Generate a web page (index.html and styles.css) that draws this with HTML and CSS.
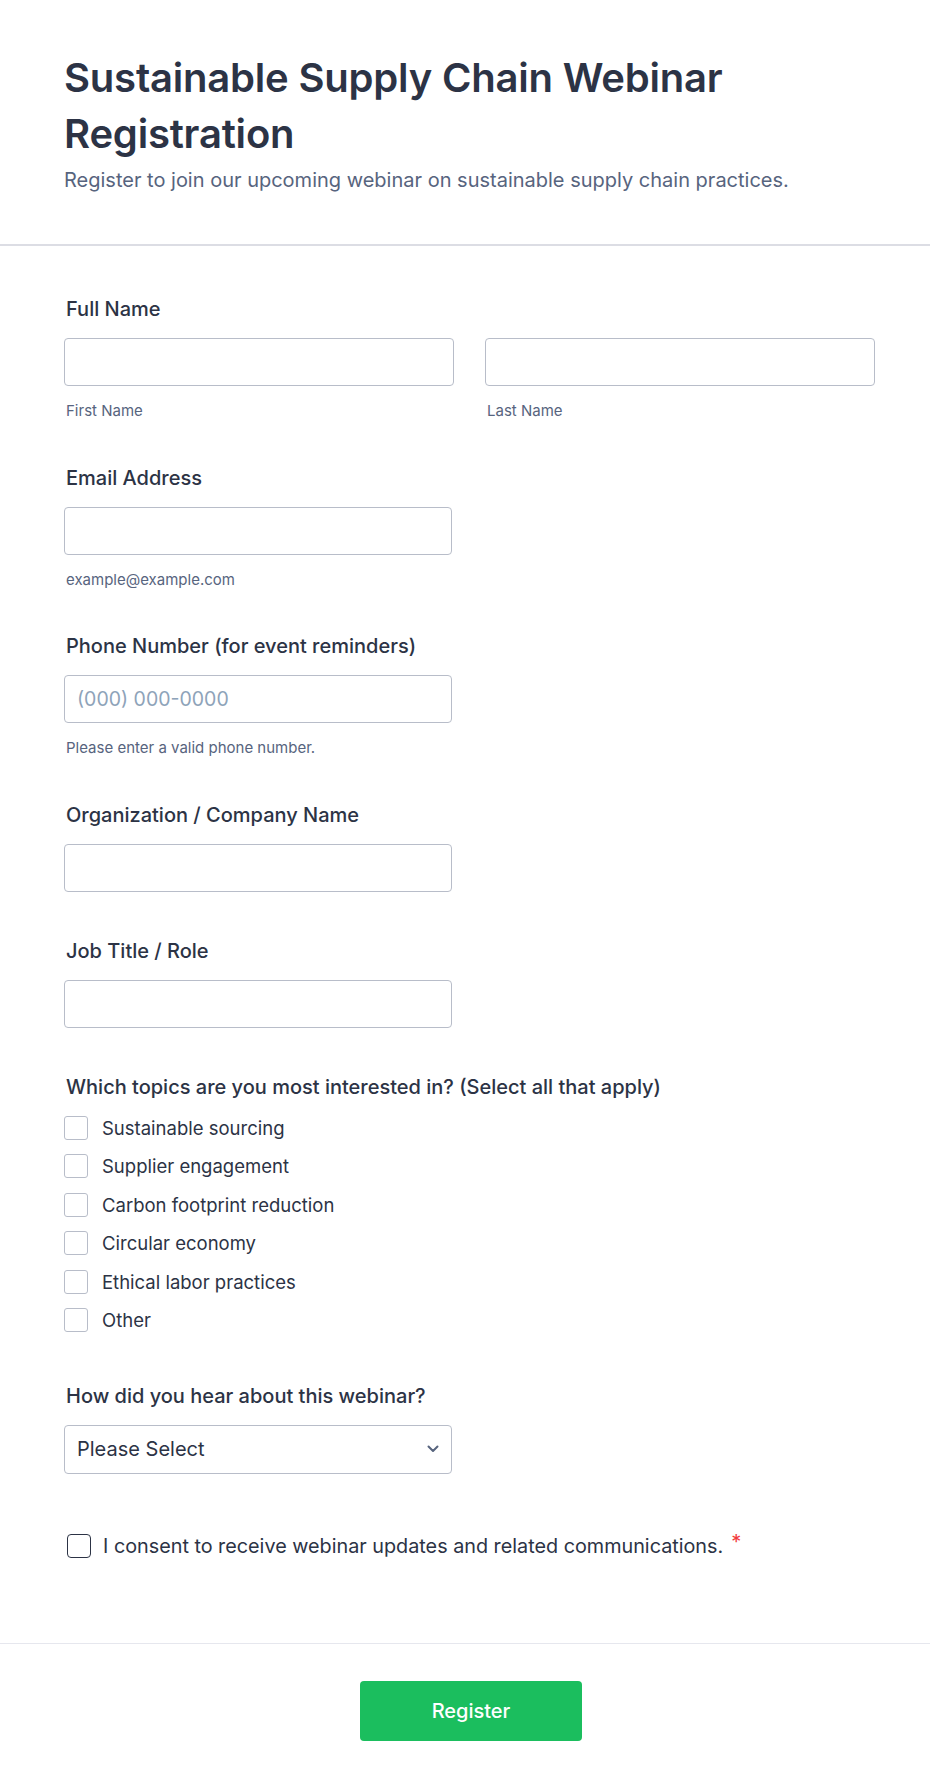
FILE: index.html
```html
<!DOCTYPE html>
<html lang="en">
<head>
<meta charset="utf-8">
<title>Sustainable Supply Chain Webinar Registration</title>
<link rel="stylesheet" href="styles.css">
</head>
<body>
<div class="page">
  <header class="header">
    <h1 class="title">Sustainable Supply Chain Webinar Registration</h1>
    <p class="subtitle">Register to join our upcoming webinar on sustainable supply chain practices.</p>
  </header>

  <form class="form">
    <div class="field">
      <label class="label">Full Name</label>
      <div class="name-row">
        <div class="name-col">
          <input class="input" type="text">
          <span class="sublabel">First Name</span>
        </div>
        <div class="name-col">
          <input class="input" type="text">
          <span class="sublabel">Last Name</span>
        </div>
      </div>
    </div>

    <div class="field">
      <label class="label">Email Address</label>
      <input class="input input-half" type="email">
      <span class="sublabel">example@example.com</span>
    </div>

    <div class="field field-phone">
      <label class="label">Phone Number (for event reminders)</label>
      <input class="input input-half" type="tel" placeholder="(000) 000-0000">
      <span class="sublabel">Please enter a valid phone number.</span>
    </div>

    <div class="field">
      <label class="label">Organization / Company Name</label>
      <input class="input input-half" type="text">
    </div>

    <div class="field field-job">
      <label class="label">Job Title / Role</label>
      <input class="input input-half" type="text">
    </div>

    <div class="field field-topics">
      <label class="label">Which topics are you most interested in? (Select all that apply)</label>
      <div class="options">
        <label class="option"><span class="box"></span><span>Sustainable sourcing</span></label>
        <label class="option"><span class="box"></span><span>Supplier engagement</span></label>
        <label class="option"><span class="box"></span><span>Carbon footprint reduction</span></label>
        <label class="option"><span class="box"></span><span>Circular economy</span></label>
        <label class="option"><span class="box"></span><span>Ethical labor practices</span></label>
        <label class="option"><span class="box"></span><span>Other</span></label>
      </div>
    </div>

    <div class="field field-select">
      <label class="label">How did you hear about this webinar?</label>
      <div class="select">
        <span>Please Select</span>
        <svg class="chevron" width="12" height="8" viewBox="0 0 12 8"><path d="M1.5 1.5 L6 6 L10.5 1.5" fill="none" stroke="#57647e" stroke-width="2" stroke-linecap="round" stroke-linejoin="round"/></svg>
      </div>
    </div>

    <div class="field field-consent">
      <label class="consent"><span class="consent-box"></span><span>I consent to receive webinar updates and related communications.</span><span class="req">*</span></label>
    </div>
  </form>

  <footer class="footer">
    <button class="submit" type="button">Register</button>
  </footer>
</div>
</body>
</html>
```

FILE: styles.css
```css
* { box-sizing: border-box; }

html, body {
  margin: 0;
  padding: 0;
  background: #ffffff;
}

body {
  font-family: "Inter", "Noto Sans", sans-serif;
  color: #2c3345;
}

.page {
  width: 930px;
  min-height: 1790px;
  border-bottom: 1px solid #eceef3;
}

.header {
  padding: 50px 55px 52px 64px;
  border-bottom: 2px solid #dcdde4;
}

.title {
  margin: 0;
  font-size: 40px;
  line-height: 56px;
  font-weight: 600;
  color: #2c3345;
  letter-spacing: -0.2px;
}

.subtitle {
  margin: 6px 0 0;
  font-size: 20px;
  line-height: 24px;
  color: #57647e;
}

.form {
  padding: 51px 55px 85px 64px;
  display: flex;
  flex-direction: column;
  gap: 46px;
}

.field {
  display: flex;
  flex-direction: column;
  align-items: flex-start;
}

.field-phone { margin-top: -1px; }
.field-job { margin-top: 1px; }
.field-topics { margin-top: 1px; }
.field-select { margin-top: 6px; }
.field-consent { margin-top: 14px; }

.label {
  font-size: 20px;
  line-height: 24px;
  font-weight: 500;
  color: #2c3345;
  margin-bottom: 17px;
  padding-left: 2px;
}

.name-row {
  display: grid;
  grid-template-columns: 390px 390px;
  column-gap: 31px;
  width: 100%;
}

.name-col {
  display: flex;
  flex-direction: column;
}

.input {
  height: 48px;
  width: 100%;
  border: 1px solid #b8bdc9;
  border-radius: 4px;
  background: #fff;
  font-family: "Inter", "Noto Sans", sans-serif;
  font-size: 19.5px;
  padding: 0 12px;
  color: #2c3345;
}

.input::placeholder {
  color: #8ea3b9;
}

.input-half {
  width: 388px;
}

.sublabel {
  margin-top: 16px;
  font-size: 15px;
  line-height: 18px;
  color: #57647e;
  padding-left: 2px;
}

.options {
  display: flex;
  flex-direction: column;
  gap: 14.4px;
}

.option {
  display: flex;
  align-items: center;
  gap: 14px;
  font-size: 18.5px;
  line-height: 24px;
  color: #2c3345;
}

.box {
  width: 24px;
  height: 24px;
  border: 1px solid #b8bdc9;
  border-radius: 3px;
  background: #fff;
  flex: none;
}

.select {
  width: 388px;
  height: 49px;
  border: 1px solid #b8bdc9;
  border-radius: 4px;
  display: flex;
  align-items: center;
  justify-content: space-between;
  padding: 0 12px 0 12px;
  font-size: 20px;
  color: #2c3345;
}

.chevron {
  display: block;
}

.consent {
  display: flex;
  align-items: center;
  font-size: 19.8px;
  line-height: 24px;
  color: #2c3345;
  padding-left: 3px;
}

.consent-box {
  width: 24px;
  height: 24px;
  border: 1.5px solid #2c3345;
  border-radius: 4px;
  margin-right: 12px;
  flex: none;
}

.req {
  color: #f23a3c;
  margin-left: 8px;
  font-size: 20px;
  position: relative;
  top: -4px;
}

.footer {
  border-top: 1px solid #e6e7ee;
  padding: 37px 52px 50px 64px;
  display: flex;
  justify-content: center;
}

.submit {
  width: 222px;
  height: 60px;
  background: #1bbe5e;
  color: #ffffff;
  border: none;
  border-radius: 4px;
  font-family: "Inter", "Noto Sans", sans-serif;
  font-size: 20px;
  font-weight: 500;
}
```
